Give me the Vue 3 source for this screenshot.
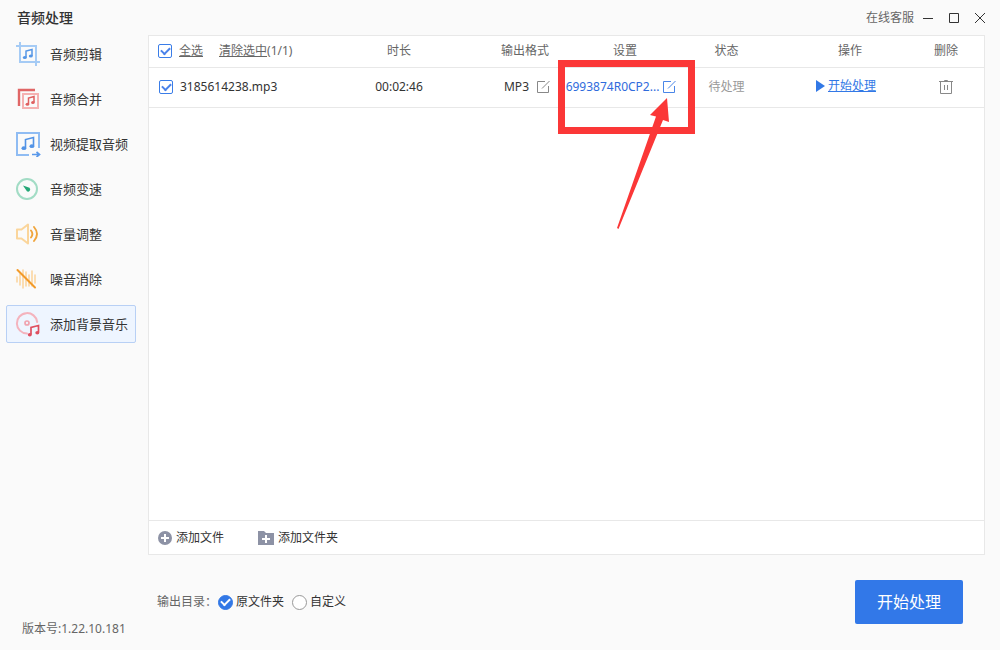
<template>
  <div class="app">
    <header class="title-bar">
      <h1 class="title">音频处理</h1>
      <div class="window-tools">
        <a href="#" class="service" @click.prevent>在线客服</a>
        <button type="button" class="win-btn" aria-label="最小化">
          <svg width="12" height="12" viewBox="0 0 12 12"><path d="M1 6.5h10" /></svg>
        </button>
        <button type="button" class="win-btn" aria-label="最大化">
          <svg width="12" height="12" viewBox="0 0 12 12"><path d="M1.5 1.5h9v9h-9z" /></svg>
        </button>
        <button type="button" class="win-btn" aria-label="关闭">
          <svg width="12" height="12" viewBox="0 0 12 12"><path d="M1 1l10 10M11 1L1 11" /></svg>
        </button>
      </div>
    </header>

    <div class="body">
      <aside class="sidebar">
        <nav class="menu">
          <button
            v-for="item in menus"
            :key="item.key"
            type="button"
            class="menu-item"
            :class="{ active: current === item.key }"
            @click="current = item.key"
          >
            <svg class="menu-icon" width="26" height="26" viewBox="0 0 26 26" fill="none">
              <g v-if="item.key === 'cut'">
                <path d="M5 1v20H25M1 5h20V25" stroke="#a5cbf5" stroke-width="2" />
                <path d="M11 16.5V10l6-1.5V15" stroke="#5596e6" stroke-width="1.5" />
                <ellipse cx="9.8" cy="16.5" rx="2" ry="1.6" fill="#5596e6" />
                <ellipse cx="15.8" cy="15" rx="2" ry="1.6" fill="#5596e6" />
              </g>
              <g v-else-if="item.key === 'merge'">
                <path d="M4 20V4h16" stroke="#e06666" stroke-width="2.4" />
                <path d="M8 8h15v14H8z" stroke="#f5b1b1" stroke-width="2" />
                <path d="M13.5 18v-6l5.5-1.5v6" stroke="#df6060" stroke-width="1.5" />
                <ellipse cx="12.4" cy="18.2" rx="1.8" ry="1.5" fill="#df6060" />
                <ellipse cx="17.9" cy="16.6" rx="1.8" ry="1.5" fill="#df6060" />
              </g>
              <g v-else-if="item.key === 'extract'">
                <path d="M14 24H2V2h22v15" stroke="#8fbcf3" stroke-width="2" />
                <path d="M10.5 17V8.5l8-2V15" stroke="#5293e6" stroke-width="1.6" />
                <ellipse cx="8.9" cy="17.2" rx="2.4" ry="1.9" fill="#5293e6" />
                <ellipse cx="16.9" cy="15.2" rx="2.4" ry="1.9" fill="#5293e6" />
                <path d="M17 23.5h7M21.5 21l3 2.5-3 2.5" stroke="#5a99ea" stroke-width="1.7" />
              </g>
              <g v-else-if="item.key === 'speed'">
                <circle cx="12" cy="13" r="10" stroke="#a2dcc5" stroke-width="2" />
                <path d="M8 9.5l6.5 2.3a2.2 2.2 0 0 1-2.6 3.5z" fill="#25a777" />
              </g>
              <g v-else-if="item.key === 'volume'">
                <path d="M2 8.5h4.500l6.500-5v19l-6.500-5H2z" stroke="#fad59b" stroke-width="2" stroke-linejoin="round" />
                <path d="M16 9.5q2.800 3.500 0 7M19 6q6 7 0 14" stroke="#f0a53c" stroke-width="1.9" stroke-linecap="round" />
              </g>
              <g v-else-if="item.key === 'noise'">
                <path
                  d="M2 11v5M5 8v11M8 4v18M11 6v14M14 9v11M17 5v15M20 9v8"
                  stroke="#fbd39b"
                  stroke-width="1.5"
                  stroke-linecap="round"
                />
                <path d="M2.5 4L20 21.5" stroke="#f29a28" stroke-width="2" stroke-linecap="round" />
              </g>
              <g v-else>
                <path d="M12 22.5A10.200 10.200 0 1 1 22.200 11" stroke="#f4b3bd" stroke-width="2" stroke-linecap="round" />
                <circle cx="12" cy="12" r="2" stroke="#f0a3af" stroke-width="1.7" />
                <path d="M16 23.500v-7l7.500-2v7" stroke="#df4f60" stroke-width="1.7" />
                <ellipse cx="14.8" cy="23.7" rx="2" ry="1.7" fill="#df4f60" />
                <ellipse cx="22.3" cy="21.7" rx="2" ry="1.7" fill="#df4f60" />
              </g>
            </svg>
            <span>{{ item.label }}</span>
          </button>
        </nav>
        <div class="version">版本号:1.22.10.181</div>
      </aside>

      <main class="main">
        <section class="panel">
          <table class="file-table">
            <colgroup>
              <col />
              <col class="col-duration" />
              <col class="col-format" />
              <col class="col-setting" />
              <col class="col-status" />
              <col class="col-action" />
              <col class="col-delete" />
            </colgroup>
            <thead>
              <tr>
                <th class="name-cell">
                  <div class="name-wrap">
                    <input id="check-all" v-model="allChecked" type="checkbox" class="checkbox" />
                    <label for="check-all" class="check-all">全选</label>
                    <button type="button" class="clear-btn" @click="clearChecked">
                      <u>清除选中</u>({{ checkedCount }}/{{ files.length }})
                    </button>
                  </div>
                </th>
                <th>时长</th>
                <th>输出格式</th>
                <th>设置</th>
                <th class="status-cell">状态</th>
                <th>操作</th>
                <th>删除</th>
              </tr>
            </thead>
            <tbody>
              <tr v-for="file in files" :key="file.id">
                <td class="name-cell">
                  <div class="name-wrap row-name">
                    <input :id="'file-' + file.id" v-model="file.checked" type="checkbox" class="checkbox" />
                    <label :for="'file-' + file.id">{{ file.name }}</label>
                  </div>
                </td>
                <td>{{ file.duration }}</td>
                <td>
                  <div class="edit-wrap format-wrap">
                    <span>{{ file.format }}</span>
                    <button type="button" class="icon-btn" aria-label="修改输出格式">
                      <svg width="14" height="14" viewBox="0 0 14 14">
                        <path d="M9 1.5H1.5v11h11V6M6 8.5L13.5 1" />
                      </svg>
                    </button>
                  </div>
                </td>
                <td class="setting-cell">
                  <div class="edit-wrap setting-wrap">
                    <span>{{ file.setting }}</span>
                    <button type="button" class="icon-btn" aria-label="修改设置">
                      <svg width="14" height="14" viewBox="0 0 14 14">
                        <path d="M9 1.5H1.5v11h11V6M6 8.5L13.5 1" />
                      </svg>
                    </button>
                  </div>
                </td>
                <td class="status-cell waiting">{{ file.status }}</td>
                <td class="action-cell">
                  <button type="button" class="run-btn">
                    <svg width="9" height="12" viewBox="0 0 9 12"><path d="M0 0l9 6-9 6z" /></svg>
                    <u>开始处理</u>
                  </button>
                </td>
                <td>
                  <button type="button" class="icon-btn trash" aria-label="删除" @click="removeFile(file.id)">
                    <svg width="16" height="16" viewBox="0 0 16 16">
                      <path d="M1 2.5h14M6.500 2.500v-1h3v1M2.5 2.5v12h11v-12M6.5 6v5M9.5 6v5" />
                    </svg>
                  </button>
                </td>
              </tr>
            </tbody>
          </table>

          <div class="panel-footer">
            <button type="button" class="add-btn">
              <svg width="14" height="14" viewBox="0 0 14 14">
                <circle cx="7" cy="7" r="7" fill="#8d92a5" />
                <path d="M7 3v8M3 7h8" stroke="#fff" stroke-width="2" />
              </svg>
              <span>添加文件</span>
            </button>
            <button type="button" class="add-btn">
              <svg width="16" height="14" viewBox="0 0 16 14">
                <path d="M0 0h6l2 2h8v12H0z" fill="#8d92a5" />
                <path d="M8 4v8M4 8h8" stroke="#fff" stroke-width="2" />
              </svg>
              <span>添加文件夹</span>
            </button>
          </div>
        </section>

        <footer class="bottom-bar">
          <div class="output">
            <span class="output-label">输出目录：</span>
            <input id="dir-source" v-model="outputDir" type="radio" name="dir" value="source" class="radio" />
            <label for="dir-source">原文件夹</label>
            <input id="dir-custom" v-model="outputDir" type="radio" name="dir" value="custom" class="radio" />
            <label for="dir-custom">自定义</label>
          </div>
          <button type="button" class="start-btn">开始处理</button>
        </footer>
      </main>
    </div>

    <!-- 操作指引：红框和箭头 -->
    <svg class="guide" width="137" height="170" viewBox="0 0 137 170">
      <rect x="3.5" y="3.5" width="130" height="67" fill="none" stroke="#fb3737" stroke-width="7" />
      <path d="M109 38L92 55l6 1.500L59 168l1.500 1L105 60l6 2z" fill="#fb3737" />
    </svg>
  </div>
</template>

<script setup>
import { ref, computed } from 'vue'

const menus = [
  { key: 'cut', label: '音频剪辑' },
  { key: 'merge', label: '音频合并' },
  { key: 'extract', label: '视频提取音频' },
  { key: 'speed', label: '音频变速' },
  { key: 'volume', label: '音量调整' },
  { key: 'noise', label: '噪音消除' },
  { key: 'bgm', label: '添加背景音乐' }
]

const current = ref('bgm')
const outputDir = ref('source')

const files = ref([
  {
    id: 1,
    name: '3185614238.mp3',
    duration: '00:02:46',
    format: 'MP3',
    setting: '6993874R0CP2...',
    status: '待处理',
    checked: true
  }
])

const checkedCount = computed(() => files.value.filter((f) => f.checked).length)

const allChecked = computed({
  get: () => files.value.length > 0 && checkedCount.value === files.value.length,
  set: (val) => files.value.forEach((f) => (f.checked = val))
})

// 移除已勾选的文件
const clearChecked = () => {
  files.value = files.value.filter((f) => !f.checked)
}

const removeFile = (id) => {
  files.value = files.value.filter((f) => f.id !== id)
}
</script>

<style>
body {
  background: #fafafa;
}
</style>

<style scoped>
.app {
  position: relative;
  display: flex;
  flex-direction: column;
  min-height: 100vh;
  background: #fafafa;
  color: #333;
  font-family: 'Noto Sans', 'Noto Sans CJK SC', sans-serif;
  font-size: 12px;
  line-height: 16px;
}

.app * {
  box-sizing: border-box;
}

button {
  padding: 0;
  border: none;
  background: none;
  color: inherit;
  font: inherit;
  cursor: pointer;
}

svg {
  display: block;
  flex: none;
}

.title-bar {
  display: flex;
  align-items: center;
  justify-content: space-between;
  height: 35px;
  padding: 0 14px 0 17px;
}

.title {
  margin: 0;
  font-size: 14px;
  font-weight: 500;
  line-height: 20px;
}

.window-tools {
  display: flex;
  align-items: center;
  gap: 14px;
}

.service {
  margin-right: -6px;
  color: #666;
  text-decoration: none;
}

.win-btn path {
  fill: none;
  stroke: #333;
}

.body {
  display: flex;
  flex: 1;
}

.sidebar {
  display: flex;
  flex-direction: column;
  justify-content: space-between;
  width: 148px;
  padding: 0 12px 13px 6px;
}

.menu {
  display: flex;
  flex-direction: column;
  gap: 7px;
}

.menu-item {
  display: flex;
  align-items: center;
  gap: 9px;
  height: 38px;
  padding-left: 8px;
  border: 1px solid transparent;
  border-radius: 2px;
  font-size: 13px;
  white-space: nowrap;
}

.menu-item.active {
  border-color: #b8d0f5;
  background: #eef5ff;
}

.version {
  padding-left: 16px;
  color: #666;
}

.main {
  display: flex;
  flex: 1;
  flex-direction: column;
  min-width: 0;
  padding-right: 15px;
}

.panel {
  display: flex;
  flex: 1;
  flex-direction: column;
  justify-content: space-between;
  border: 1px solid #e8e8e8;
  background: #fff;
}

.file-table {
  width: 100%;
  border-collapse: collapse;
  table-layout: fixed;
}

.col-duration {
  width: 172px;
}

.col-format {
  width: 80px;
}

.col-setting {
  width: 120px;
}

.col-status {
  width: 107px;
}

.col-action {
  width: 116px;
}

.col-delete {
  width: 76px;
}

.file-table th,
.file-table td {
  padding: 0;
  border-bottom: 1px solid #e8e8e8;
  text-align: center;
  white-space: nowrap;
}

.file-table th {
  height: 31px;
  color: #666;
  font-weight: 400;
}

.file-table td {
  height: 40px;
}

.file-table .name-cell {
  padding-left: 9px;
}

.file-table .status-cell {
  padding-right: 24px;
}

.file-table .setting-cell,
.file-table .action-cell {
  padding-right: 8px;
}

.name-wrap {
  display: flex;
  align-items: center;
  gap: 7px;
}

.row-name {
  padding-left: 1px;
}

.check-all {
  text-decoration: underline;
}

.clear-btn {
  margin-left: 9px;
}

.checkbox,
.radio {
  display: flex;
  flex: none;
  align-items: center;
  justify-content: center;
  margin: 0;
  appearance: none;
  background: #fff;
}

.checkbox {
  width: 14px;
  height: 14px;
  border: 1px solid #3a7de8;
  border-radius: 2px;
}

.checkbox:checked::after,
.radio:checked::after {
  content: '';
  box-sizing: border-box;
  width: 9px;
  height: 6px;
  margin-bottom: 3px;
  border: solid #4a82ea;
  border-width: 0 0 2px 2px;
  transform: rotate(-45deg);
}

.edit-wrap {
  display: flex;
  align-items: center;
  justify-content: center;
}

.format-wrap {
  gap: 7px;
  padding-left: 4px;
}

.setting-wrap {
  gap: 3px;
  color: #2f6bdc;
}

.icon-btn path {
  fill: none;
  stroke: #888;
}

.setting-wrap .icon-btn path {
  stroke: #4a86e8;
}

.trash {
  display: inline-block;
  vertical-align: middle;
}

.waiting {
  color: #999;
}

.run-btn {
  display: inline-flex;
  align-items: center;
  gap: 3px;
  color: #3278e6;
}

.run-btn path {
  fill: #3278e6;
}

.panel-footer {
  display: flex;
  align-items: center;
  gap: 34px;
  height: 34px;
  padding-left: 9px;
  border-top: 1px solid #e8e8e8;
}

.add-btn {
  display: flex;
  align-items: center;
  gap: 4px;
}

.bottom-bar {
  display: flex;
  align-items: center;
  justify-content: space-between;
  height: 95px;
  padding: 0 22px 1px 9px;
}

.output {
  display: flex;
  align-items: center;
}

.output-label {
  color: #666;
}

.radio {
  width: 15px;
  height: 15px;
  margin: 0 3px 0 8px;
  border: 1px solid #999;
  border-radius: 50%;
}

.output-label + .radio {
  margin-left: 1px;
}

.radio:checked {
  border-color: #3278e6;
  background: #3278e6;
}

.radio:checked::after {
  border-color: #fff;
}

.start-btn {
  width: 108px;
  height: 44px;
  border-radius: 2px;
  background: #3278e8;
  color: #fff;
  font-size: 16px;
}

.guide {
  position: absolute;
  top: 60px;
  right: 305px;
  pointer-events: none;
}
</style>
